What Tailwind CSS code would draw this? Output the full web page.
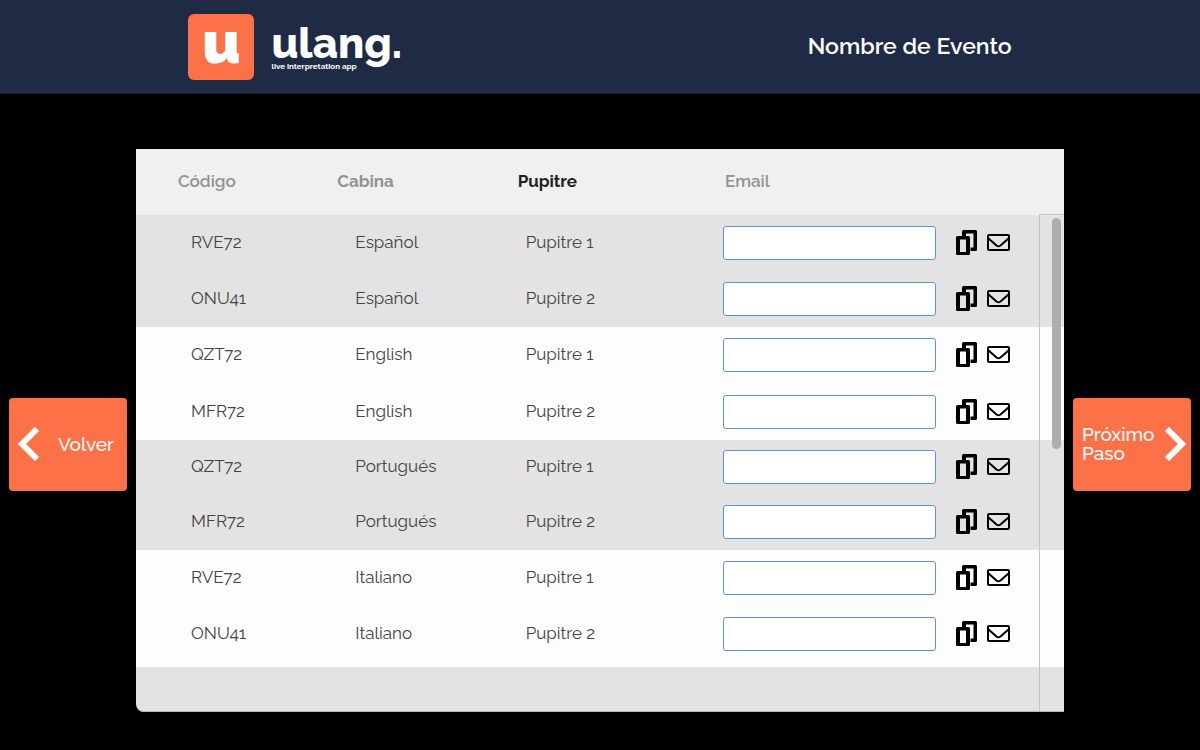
<!DOCTYPE html>
<html lang="es">
  <head>
    <meta charset="UTF-8" />
    <meta name="viewport" content="width=device-width, initial-scale=1.0" />
    <title>ulang - Nombre de Evento</title>
    <script src="https://cdn.jsdelivr.net/npm/@tailwindcss/browser@4"></script>
  </head>
  <body class="bg-black font-['Raleway','Lato',sans-serif] min-h-screen flex flex-col">
    <!-- iconos -->
    <svg class="hidden" xmlns="http://www.w3.org/2000/svg">
      <symbol id="icon-copy" viewBox="0 0 22 26">
        <path
          fill="currentColor"
          fill-rule="evenodd"
          d="M7.500 0H19.500A1.500 1.500 0 0 1 21 1.500V19.500a1.500 1.500 0 0 1-1.500 1.500H14.500V17.500H17.500V3.500H10V6H6V1.500A1.500 1.500 0 0 1 7.500 0ZM1.500 6H12.500A1.500 1.500 0 0 1 14 7.500V23.500a1.500 1.500 0 0 1-1.500 1.500H1.500A1.500 1.500 0 0 1 0 23.500V7.500A1.500 1.500 0 0 1 1.500 6ZM4 9.500V22H10V9.500Z"
        />
      </symbol>
      <symbol id="icon-mail" viewBox="0 0 24 18">
        <g fill="none" stroke="currentColor" stroke-width="2" stroke-linejoin="round">
          <rect x="2" y="1" width="21" height="15" rx="1" />
          <path d="M2 4L10.500 11.500Q12.500 13 14.500 11.500L23 4" />
        </g>
      </symbol>
    </svg>

    <header class="bg-[#1f2b45] border-b border-[#17223a] h-[94px] px-[15.7%] flex items-center justify-between text-white">
      <a href="#" class="flex items-center gap-[17px]">
        <span class="size-[66px] rounded-md bg-[#fd7149] flex items-center justify-center">
          <span class="text-[60px] leading-[56px] font-black pb-[10px]">u</span>
        </span>
        <span class="flex flex-col">
          <span class="text-[43px] leading-[38px] font-extrabold">ulang.</span>
          <span class="text-[8px] leading-[8px] font-bold">live interpretation app</span>
        </span>
      </a>
      <h1 class="text-[23px] font-semibold">Nombre de Evento</h1>
    </header>

    <main class="grow flex items-start gap-[9px] px-[9px] pt-[55px] pb-[37px]">
      <button
        type="button"
        class="w-[118px] h-[93px] shrink-0 self-center mt-[26px] rounded-[4px] bg-[#fd7149] text-white text-[19px] font-medium flex items-center justify-between pl-[9px] pr-[13px]"
      >
        <svg class="w-[22px] h-[34px]" viewBox="0 0 22 34" fill="none" stroke="currentColor" stroke-width="6">
          <path d="M19 2L4 17L19 32" />
        </svg>
        Volver
      </button>

      <div class="grow relative bg-[#e3e3e3] rounded-bl-lg overflow-hidden pb-[45px]">
        <table class="w-full table-fixed text-left">
          <thead class="bg-[#f0f0f0] text-[17px] text-[#929292]">
            <tr class="h-[66px]">
              <th scope="col" class="w-[19%] pl-[42px] font-semibold">Código</th>
              <th scope="col" class="w-[19%] pl-[25px] font-bold">Cabina</th>
              <th scope="col" class="w-[23%] pl-[29px] font-bold text-[#222]">Pupitre</th>
              <th scope="col" class="pl-[23px] font-semibold">Email</th>
            </tr>
          </thead>
          <tbody id="codes" class="text-[17px] text-[#444]"></tbody>
        </table>

        <!-- barra de scroll -->
        <div class="absolute right-0 top-[65px] bottom-0 w-[25px] border border-r-0 border-[#c4c4c4]">
          <div class="absolute right-[3px] top-[3px] w-[9px] h-[231px] rounded-full bg-[#adadad]"></div>
        </div>
        <div class="absolute inset-x-0 bottom-0 h-2 border-b border-[#b5b5b5] rounded-bl-lg"></div>
      </div>

      <button
        type="button"
        class="w-[118px] h-[93px] shrink-0 self-center mt-[26px] rounded-[4px] bg-[#fd7149] text-white text-[19px] leading-[19px] font-medium text-left flex items-center justify-between pl-[9px] pr-[5px]"
      >
        <span>Próximo<br />Paso</span>
        <svg class="w-[22px] h-[34px]" viewBox="0 0 22 34" fill="none" stroke="currentColor" stroke-width="6">
          <path d="M3 2L18 17L3 32" />
        </svg>
      </button>
    </main>

    <script>
      const rows = [
        ["RVE72", "Español", "Pupitre 1", "bg-[#e3e3e3] h-[56px]"],
        ["ONU41", "Español", "Pupitre 2", "bg-[#e3e3e3] h-[56px]"],
        ["QZT72", "English", "Pupitre 1", "bg-[#fdfdfd] h-[56px]"],
        ["MFR72", "English", "Pupitre 2", "bg-[#fdfdfd] h-[57px]"],
        ["QZT72", "Portugués", "Pupitre 1", "bg-[#e3e3e3] h-[54px]"],
        ["MFR72", "Portugués", "Pupitre 2", "bg-[#e3e3e3] h-[56px]"],
        ["RVE72", "Italiano", "Pupitre 1", "bg-[#fdfdfd] h-[56px]"],
        ["ONU41", "Italiano", "Pupitre 2", "bg-[#fdfdfd] h-[61px] *:pb-[6px]"],
      ];

      document.getElementById("codes").innerHTML = rows
        .map(
          ([code, booth, desk, style], i) => `
          <tr class="${style}">
            <td class="pl-[55px]">${code}</td>
            <td class="pl-[43px]">${booth}</td>
            <td class="pl-[37px]">${desk}</td>
            <td class="pl-[21px]">
              <div class="flex items-center">
                <input type="email" id="email-${i}" aria-label="Email ${code} ${desk}"
                  class="w-[213px] h-[34px] px-2 rounded-[3px] border border-[#5b93d6] bg-white" />
                <button type="button" aria-label="Copiar" class="ml-5 text-black">
                  <svg class="block w-[22px] h-[26px]"><use href="#icon-copy" /></svg>
                </button>
                <button type="button" aria-label="Enviar" class="ml-2 text-black">
                  <svg class="block w-[24px] h-[18px]"><use href="#icon-mail" /></svg>
                </button>
              </div>
            </td>
          </tr>`
        )
        .join("");
    </script>
  </body>
</html>
